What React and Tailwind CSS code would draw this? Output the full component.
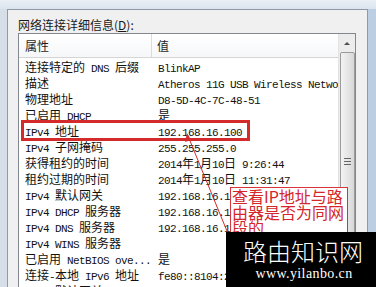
import React from "react";

const rows = [
  ["连接特定的 DNS 后缀", "BlinkAP"],
  ["描述", "Atheros 11G USB Wireless Network Adapter"],
  ["物理地址", "D8-5D-4C-7C-48-51"],
  ["已启用 DHCP", "是"],
  ["IPv4 地址", "192.168.16.100"],
  ["IPv4 子网掩码", "255.255.255.0"],
  ["获得租约的时间", "2014年1月10日 9:26:44"],
  ["租约过期的时间", "2014年1月10日 11:31:47"],
  ["IPv4 默认网关", "192.168.16.1"],
  ["IPv4 DHCP 服务器", "192.168.16.1"],
  ["IPv4 DNS 服务器", "192.168.16.1"],
  ["IPv4 WINS 服务器", ""],
  ["已启用 NetBIOS ove...", "是"],
  ["连接-本地 IPv6 地址", "fe80::8104:2f3c:5e9a:1d7b%11"],
  ["IPv6 默认网关", ""],
];

// split into ascii / cjk runs so the ascii part gets the narrow mono face
function Mixed({ text }) {
  const parts = text.match(/[\x00-\x7f]+|[^\x00-\x7f]+/g) || [];
  return parts.map((p, i) =>
    /^[\x00-\x7f]+$/.test(p) ? (
      <span
        key={i}
        className="font-['Liberation_Mono',monospace] text-[11px] tracking-[-0.6px] whitespace-pre"
      >
        {p}
      </span>
    ) : (
      <span key={i} className="font-['Noto_Sans_CJK_SC',sans-serif] text-[12px]">
        {p}
      </span>
    )
  );
}

export default function App() {
  return (
    <div className="relative w-[376px] h-[287px] overflow-hidden bg-[#d3dde8]">
      <div className="h-[9px] bg-gradient-to-b from-[#e9eff5] to-[#dbe4ee]" />
      <div className="flex h-[278px]">
        <div className="w-[7px] bg-[#d6dee7]" />
        <div className="w-[361px] bg-[#f0f0f0] border-l border-t border-r border-[#8e9aa6] pl-[10px] pt-[6px]">
          <div className="h-[17px] flex items-center font-['Noto_Sans_CJK_SC',sans-serif] text-[12px] text-[#1a1a1a]">
            网络连接详细信息(<u>D</u>):
          </div>
          <div className="w-[338px] h-[260px] bg-white border border-[#828790] flex overflow-hidden">
            <div className="w-[319px]">
              <div className="h-[24px] flex items-center bg-gradient-to-b from-white to-[#f6f7f9] border-b border-[#d5d5d5] font-['Noto_Sans_CJK_SC',sans-serif] text-[12px] text-[#1e1e1e]">
                <div className="w-[133px] pl-[6px] h-full flex items-center border-r border-[#dcdcdc]">
                  属性
                </div>
                <div className="pl-[5px]">值</div>
              </div>
              {rows.map(([k, v], i) => (
                <div key={i} className="h-[16px] flex items-center text-[#111] leading-none">
                  <div className="w-[139px] pl-[6px] whitespace-nowrap overflow-hidden">
                    <Mixed text={k} />
                  </div>
                  <div className="w-[180px] whitespace-nowrap overflow-hidden">
                    <Mixed text={v} />
                  </div>
                </div>
              ))}
            </div>
            <div className="w-[17px] bg-[#ececec] border-l border-[#e3e3e3] flex flex-col items-center">
              <div className="h-[18px] w-full flex items-center justify-center">
                <div className="w-0 h-0 border-l-[3px] border-r-[3px] border-b-[3px] border-l-transparent border-r-transparent border-b-[#4d4d4d]" />
              </div>
              <div className="w-[15px] flex-1 rounded-[2px] border border-[#9b9b9b] bg-gradient-to-r from-[#f3f3f3] via-[#e6e6e6] to-[#d8d8d8] flex items-start justify-center pt-[105px]">
                <div className="flex flex-col gap-[2px]">
                  <div className="w-[7px] h-px bg-[#666]" />
                  <div className="w-[7px] h-px bg-[#666]" />
                  <div className="w-[7px] h-px bg-[#666]" />
                </div>
              </div>
            </div>
          </div>
        </div>
        <div className="flex-1 bg-[#bccfe2]" />
      </div>

      {/* red highlight on IPv4 row */}
      <div className="absolute left-[21px] top-[120px] w-[229px] h-[21px] border-[3px] border-[#d42a2a]" />

      <svg className="absolute left-0 top-0 pointer-events-none" width="376" height="287">
        <line x1="229" y1="236" x2="188" y2="136" stroke="#d42a2a" strokeWidth="1" />
        <polygon points="187,133 185,142 191,140" fill="#d42a2a" />
      </svg>

      {/* annotation */}
      <div className="absolute left-[230px] top-[187px] w-[118px] h-[60px] bg-white border-[1.5px] border-[#d8343a] font-['Noto_Sans_CJK_SC',sans-serif] text-[16px] leading-[15.5px] text-[#d4262b] pl-px pt-px">
        查看IP地址与路<br />由器是否为同网<br />段的
      </div>

      {/* watermark */}
      <div className="absolute left-[226px] top-[232px] right-0 bottom-0 bg-black flex flex-col items-center pt-[6px]">
        <div className="font-['Noto_Sans_CJK_SC',sans-serif] text-[24px] leading-[26px] text-white font-light pl-[4px]">
          路由知识网
        </div>
        <div className="font-['Liberation_Serif',serif] text-[14px] leading-[14px] text-white mt-[3px] pl-[6px] tracking-[0.4px]">
          www.yilanbo.cn
        </div>
      </div>
    </div>
  );
}
